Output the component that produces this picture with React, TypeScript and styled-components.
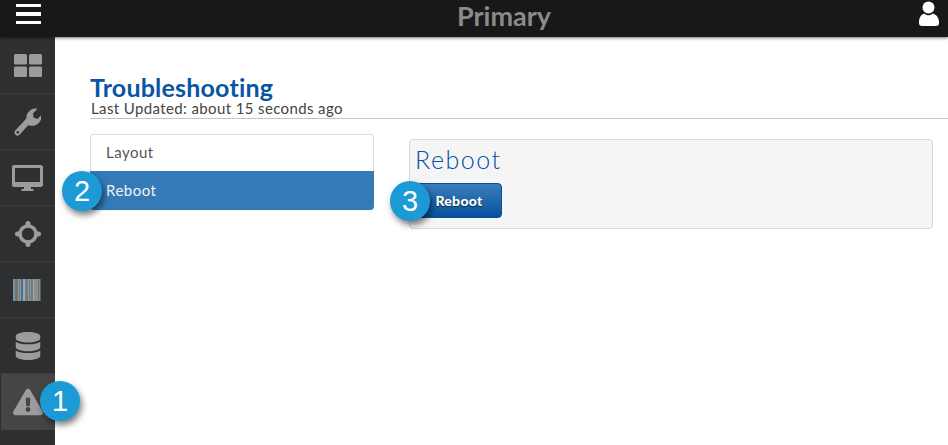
import React from "react";
import styled, { createGlobalStyle } from "styled-components";
import { FaDatabase, FaExclamationTriangle } from "react-icons/fa";

const Global = createGlobalStyle`
  html, body { margin: 0; padding: 0; background: #fff; height: 100%; overflow: hidden; }
  body { font-family: "Lato", "Liberation Sans", sans-serif; }
  #root { height: 100%; }
`;

const Page = styled.div`
  width: 948px;
  height: 445px;
  display: flex;
  flex-direction: column;
  overflow: hidden;
`;

const TopBar = styled.header`
  height: 37px;
  flex: none;
  background: #181818;
  box-shadow: 0 1px 3px rgba(0, 0, 0, 0.55);
  display: flex;
  align-items: flex-start;
  position: relative;
  z-index: 2;
`;

const Burger = styled.div`
  width: 25px;
  margin: 4px 0 0 16px;
  display: flex;
  flex-direction: column;
  gap: 5px;
  flex: none;
`;

const BurgerBar = styled.span`
  height: 3.4px;
  background: #fff;
  display: block;
`;

const BarTitle = styled.div`
  flex: 1;
  text-align: center;
  font-size: 27px;
  line-height: 32px;
  font-weight: 700;
  color: #8a8a8a;
  padding-left: 48px;
`;

const UserSlot = styled.div`
  width: 29px;
  flex: none;
  line-height: 0;
  padding-top: 1px;
`;

const Body = styled.div`
  flex: 1;
  display: flex;
  min-height: 0;
`;

const Sidebar = styled.nav`
  width: 55px;
  flex: none;
  background: #2e2f31;
  display: flex;
  flex-direction: column;
  padding-top: 1px;
`;

const NavItem = styled.div<{ $active?: boolean }>`
  height: 55px;
  margin-bottom: 1px;
  box-sizing: border-box;
  box-shadow: 0 1px 0 #3a3b3d;
  display: flex;
  align-items: center;
  justify-content: center;
  color: #9c9c9c;
  position: relative;
  ${(p) => p.$active && `
    background: #454545;
    margin-left: 1px;
    height: 56px;
    box-shadow: none;
  `}
`;

const Main = styled.main`
  flex: 1;
  min-width: 0;
  padding: 36px 0 0 35px;
`;

const Title = styled.h1`
  margin: 0;
  font-size: 25px;
  line-height: 28px;
  font-weight: 700;
  color: #0a55a3;
  letter-spacing: 0.2px;
`;

const Updated = styled.div`
  font-size: 15px;
  line-height: 15px;
  color: #444;
  padding: 0 0 2px 1px;
  height: 15px;
  border-bottom: 1px solid #c4c4c4;
  letter-spacing: 0.38px;
`;

const Columns = styled.div`
  display: flex;
  align-items: flex-start;
  margin-top: 15px;
`;

const List = styled.div`
  width: 284px;
  flex: none;
  border-radius: 4px;
  box-shadow: 0 1px 1px rgba(0, 0, 0, 0.05);
`;

const ListItem = styled.div<{ $active?: boolean }>`
  position: relative;
  box-sizing: border-box;
  height: ${(p) => (p.$active ? "39px" : "37px")};
  padding-left: 16px;
  padding-bottom: 2px;
  display: flex;
  align-items: center;
  font-size: 15px;
  letter-spacing: 0.5px;
  ${(p) =>
    p.$active
      ? `background:#337ab7;color:#f2f2f2;border-radius:0 0 4px 4px;`
      : `background:#fff;color:#555;border:1px solid #ddd;border-bottom:none;border-radius:4px 4px 0 0;padding-left:15px;`}
`;

const Panel = styled.section`
  flex: none;
  box-sizing: border-box;
  width: 524px;
  height: 90px;
  margin: 5px 0 0 35px;
  background: #f5f5f5;
  border: 1px solid #d8d8d8;
  border-radius: 4px;
  padding: 5px 6px;
`;

const PanelTitle = styled.h2`
  margin: 0 0 0 -1px;
  font-size: 25px;
  line-height: 28px;
  font-weight: 300;
  color: #0050a5;
  letter-spacing: 1.5px;
`;

const RebootBtn = styled.button`
  position: relative;
  display: block;
  margin-top: 10px;
  width: 86px;
  height: 35px;
  padding: 0;
  border: 1px solid #0a4f96;
  border-radius: 4px;
  background: linear-gradient(#3c7dbc, #07519c);
  color: #fff;
  font-family: inherit;
  font-size: 14px;
  font-weight: 900;
  letter-spacing: 0.3px;
  text-shadow: 0 1px 1px rgba(0, 0, 0, 0.6);
`;

const Badge = styled.span<{ $left: number; $top: number }>`
  position: absolute;
  left: ${(p) => p.$left}px;
  top: ${(p) => p.$top}px;
  width: 40px;
  height: 40px;
  border-radius: 50%;
  background: #1b9ad6;
  color: #fff;
  font-family: "Liberation Sans", sans-serif;
  font-size: 29px;
  font-weight: 400;
  line-height: 40px;
  text-align: center;
  letter-spacing: 0;
  text-shadow: none;
  box-shadow: 2px 4px 6px rgba(0, 0, 0, 0.5);
  z-index: 3;
`;

const UserIcon = () => (
  <svg width="20" height="25" viewBox="0 0 20 25" fill="#fff">
    <circle cx="9.5" cy="6.5" r="6" />
    <path d="M0 22c0-5 1.5-8 5-9.5 1.4 1.2 3 1.8 4.5 1.8s3.2-.6 4.500-1.800c4 1.500 6 4.500 6 9.500 0 2-1 3-3 3H3c-2 0-3-1-3-3z" />
  </svg>
);

const Tiles = () => (
  <svg width="28" height="23" viewBox="0 0 28 23" fill="#9c9c9c">
    <rect x="0" y="0" width="13" height="10.5" rx="1.5" />
    <rect x="15" y="0" width="13" height="10.5" rx="1.5" />
    <rect x="0" y="12.5" width="13" height="10.5" rx="1.5" />
    <rect x="15" y="12.5" width="13" height="10.5" rx="1.5" />
  </svg>
);

const Wrench = () => (
  <svg width="27" height="28" viewBox="0 0 27 28" fill="none">
    <path d="M3.500 24.500 L15 12" stroke="#9c9c9c" strokeWidth="6" strokeLinecap="round" />
    <path
      d="M13 13.500c-1.500-4-.5-8.500 3-11 2.300-1.700 5-2.300 7.500-1.700l-4.500 4.700.5 4 4 1.500 3.800-4c.6 3-.4 6.200-3 8.500-2.800 2.500-6.800 3-10 1.500z"
      fill="#9c9c9c"
    />
    <circle cx="3.800" cy="24.200" r="1.300" fill="#2e2f31" />
  </svg>
);

const Monitor = () => (
  <svg width="31" height="26" viewBox="0 0 31 26">
    <path
      fillRule="evenodd"
      fill="#9c9c9c"
      d="M2 0h27a2 2 0 0 1 2 2v18a2 2 0 0 1-2 2H2a2 2 0 0 1-2-2V2a2 2 0 0 1 2-2zM3 3v14h25V3z"
    />
    <path fill="#9c9c9c" d="M12 22h7v2h2.500v2h-12v-2H12z" />
  </svg>
);

const Crosshair = () => (
  <svg width="26" height="26" viewBox="0 0 26 26" fill="none">
    <circle cx="13" cy="13" r="8" stroke="#9c9c9c" strokeWidth="3.500" />
    <path
      d="M10.500 2.500a2.500 2.500 0 0 1 5 0v4h-5zM10.500 23.500a2.500 2.500 0 0 0 5 0v-4h-5zM2.500 10.500a2.500 2.500 0 0 0 0 5h4v-5zM23.500 10.500a2.500 2.500 0 0 1 0 5h-4v-5z"
      fill="#9c9c9c"
    />
  </svg>
);

const bars = [
  ["#8d8f86", 2], ["#4f7ea8", 1.5], ["#a98a62", 1], ["#7c97a6", 2], ["#9a9a92", 1.5], ["#3f6f9e", 2],
  ["#a8a89e", 2], ["#5f8cad", 1.5], ["#b08c60", 1], ["#7f9bad", 2], ["#9c8f7a", 1.5], ["#4f80a8", 1.5],
  ["#a3a39a", 1.5], ["#b08a58", 1], ["#6d94b0", 2], ["#a58a68", 1.5], ["#7d8f98", 2],
] as const;

const Barcode = () => {
  let x = 0;
  return (
    <svg width="29" height="22" viewBox="0 0 29 22">
      {bars.map(([c, w], i) => {
        const r = <rect key={i} x={x} y="0" width={w} height="22" fill={c} />;
        x += w;
        return r;
      })}
    </svg>
  );
};

export default function App() {
  return (
    <Page>
      <Global />
      <TopBar>
        <Burger>
          <BurgerBar />
          <BurgerBar />
          <BurgerBar />
        </Burger>
        <BarTitle>Primary</BarTitle>
        <UserSlot>
          <UserIcon />
        </UserSlot>
      </TopBar>
      <Body>
        <Sidebar>
          <NavItem><Tiles /></NavItem>
          <NavItem><Wrench /></NavItem>
          <NavItem><Monitor /></NavItem>
          <NavItem><Crosshair /></NavItem>
          <NavItem><Barcode /></NavItem>
          <NavItem><FaDatabase size={28} /></NavItem>
          <NavItem $active>
            <FaExclamationTriangle size={30} />
            <Badge $left={39} $top={7}>1</Badge>
          </NavItem>
        </Sidebar>
        <Main>
          <Title>Troubleshooting</Title>
          <Updated>Last Updated: about 15 seconds ago</Updated>
          <Columns>
            <List>
              <ListItem>Layout</ListItem>
              <ListItem $active>
                Reboot
                <Badge $left={-28} $top={0}>2</Badge>
              </ListItem>
            </List>
            <Panel>
              <PanelTitle>Reboot</PanelTitle>
              <RebootBtn>
                Reboot
                <Badge $left={-27} $top={-3}>3</Badge>
              </RebootBtn>
            </Panel>
          </Columns>
        </Main>
      </Body>
    </Page>
  );
}
